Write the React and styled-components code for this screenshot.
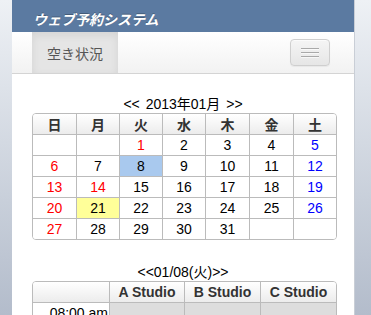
import React from "react";
import styled, { createGlobalStyle } from "styled-components";

const Global = createGlobalStyle`
  html, body { margin: 0; padding: 0; }
  body {
    height: 315px;
    overflow: hidden;
    background: linear-gradient(to bottom, #eef1f5 0%, #d3d9e2 45%, #b3bccb 100%);
    font-family: "Liberation Sans", "Noto Sans CJK JP", sans-serif;
  }
`;

const Page = styled.div`
  margin: 0 15px 0 12px;
  width: 343px;
  min-height: 315px;
  background: #fff;
  border-right: 1px solid #c9ced6;
  box-sizing: border-box;
`;

const Header = styled.div`
  height: 32px;
  background: #5b7aa1;
  padding-left: 21px;
  display: flex;
  align-items: flex-end;
  box-sizing: border-box;
  padding-bottom: 4px;
`;

const Title = styled.div`
  color: #fff;
  font-family: "Noto Sans CJK JP", sans-serif;
  font-weight: 700;
  font-size: 14px;
  line-height: 18px;
  font-style: italic;
  text-shadow: 0 -1px 0 rgba(0,0,0,0.25);
`;

const Navbar = styled.div`
  height: 41px;
  background: linear-gradient(to bottom, #ffffff, #f2f2f2);
  border-bottom: 1px solid #d4d4d4;
  display: flex;
  align-items: stretch;
  justify-content: space-between;
  padding: 0 24px 0 20px;
`;

const Tab = styled.div`
  width: 86px;
  background: #e5e5e5;
  box-shadow: inset 0 3px 8px rgba(0,0,0,0.08);
  display: flex;
  align-items: center;
  justify-content: center;
  font-family: "Noto Sans CJK JP", sans-serif;
  font-size: 14px;
  color: #555;
`;

const MenuButton = styled.div`
  align-self: center;
  width: 40px;
  height: 27px;
  box-sizing: border-box;
  border: 1px solid #cfcfcf;
  border-radius: 4px;
  background: linear-gradient(to bottom, #f5f5f5, #e6e6e6);
  box-shadow: inset 0 1px 0 rgba(255,255,255,0.6), 0 1px 1px rgba(0,0,0,0.05);
  display: flex;
  flex-direction: column;
  align-items: center;
  justify-content: center;
  gap: 3px;
`;

const Bar = styled.span`
  display: block;
  width: 18px;
  height: 1px;
  background: #a9a9a9;
  box-shadow: 0 1px 0 rgba(255,255,255,0.6);
`;

const Content = styled.div`
  padding: 21px 20px 0 20px;
`;

const Caption = styled.div`
  text-align: center;
  font-family: "Liberation Sans", "Noto Sans CJK JP", sans-serif;
  font-size: 14px;
  line-height: 18px;
  color: #000;
  margin-top: ${(p) => p.$top || 0}px;
  word-spacing: ${(p) => p.$ws || 0}px;
`;

const Table = styled.table`
  width: 303px;
  table-layout: fixed;
  border-collapse: separate;
  border-spacing: 0;
  border: 1px solid #bbb;
  border-radius: 4px;
  overflow: hidden;
  font-family: "Liberation Sans", "Noto Sans CJK JP", sans-serif;
`;

const Th = styled.th`
  height: 20px;
  padding: 0;
  background: linear-gradient(to bottom, #ffffff, #ececec);
  border-left: ${(p) => (p.$first ? "none" : "1px solid #bbb")};
  font-size: 14px;
  font-weight: 700;
  color: #333;
  text-align: center;
  font-family: ${(p) => (p.$jp ? '"Noto Sans CJK JP", sans-serif' : '"Liberation Sans", sans-serif')};
  line-height: 20px;
`;

const Td = styled.td`
  height: 20px;
  padding: ${(p) => (p.$right ? "0 1px 0 0" : "0")};
  border-top: 1px solid #bbb;
  border-left: ${(p) => (p.$first ? "none" : "1px solid #bbb")};
  background: ${(p) => p.$bg || "#fff"};
  color: ${(p) => p.$color || "#000"};
  font-size: 14px;
  text-align: ${(p) => (p.$right ? "right" : "center")};
  line-height: 20px;
  white-space: nowrap;
  overflow: hidden;
`;

const weekdays = ["日", "月", "火", "水", "木", "金", "土"];
const calWidths = [43, 43, 43, 43, 44, 44, 43];
const weeks = [
  [null, null, 1, 2, 3, 4, 5],
  [6, 7, 8, 9, 10, 11, 12],
  [13, 14, 15, 16, 17, 18, 19],
  [20, 21, 22, 23, 24, 25, 26],
  [27, 28, 29, 30, 31, null, null],
];
const holidays = [1, 14];

function dayColor(d, i) {
  if (d == null) return "#000";
  if (i === 0 || holidays.includes(d)) return "#f00";
  if (i === 6) return "#00f";
  return "#000";
}
function dayBg(d) {
  if (d === 8) return "#a9c9ee";
  if (d === 21) return "#ffff99";
  return "#fff";
}

const studios = ["A Studio", "B Studio", "C Studio"];
const studioWidths = [76, 75, 76, 76];

export default function App() {
  return (
    <>
      <Global />
      <Page>
        <Header>
          <Title>ウェブ予約システム</Title>
        </Header>
        <Navbar>
          <Tab>空き状況</Tab>
          <MenuButton>
            <Bar />
            <Bar />
            <Bar />
          </MenuButton>
        </Navbar>
        <Content>
          <Caption $ws={2}>&lt;&lt; 2013年01月 &gt;&gt;</Caption>
          <Table>
            <colgroup>
              {calWidths.map((w, i) => (
                <col key={i} style={{ width: w }} />
              ))}
            </colgroup>
            <thead>
              <tr>
                {weekdays.map((w, i) => (
                  <Th key={w} $first={i === 0} $jp>
                    {w}
                  </Th>
                ))}
              </tr>
            </thead>
            <tbody>
              {weeks.map((wk, r) => (
                <tr key={r}>
                  {wk.map((d, i) => (
                    <Td key={i} $first={i === 0} $color={dayColor(d, i)} $bg={dayBg(d)}>
                      {d ?? ""}
                    </Td>
                  ))}
                </tr>
              ))}
            </tbody>
          </Table>
          <Caption $top={23}>&lt;&lt;01/08(火)&gt;&gt;</Caption>
          <Table>
            <colgroup>
              {studioWidths.map((w, i) => (
                <col key={i} style={{ width: w }} />
              ))}
            </colgroup>
            <thead>
              <tr>
                <Th $first />
                {studios.map((s) => (
                  <Th key={s}>{s}</Th>
                ))}
              </tr>
            </thead>
            <tbody>
              <tr>
                <Td $first $right>08:00 am</Td>
                <Td $bg="#dddddd" />
                <Td $bg="#dddddd" />
                <Td $bg="#dddddd" />
              </tr>
            </tbody>
          </Table>
        </Content>
      </Page>
    </>
  );
}
